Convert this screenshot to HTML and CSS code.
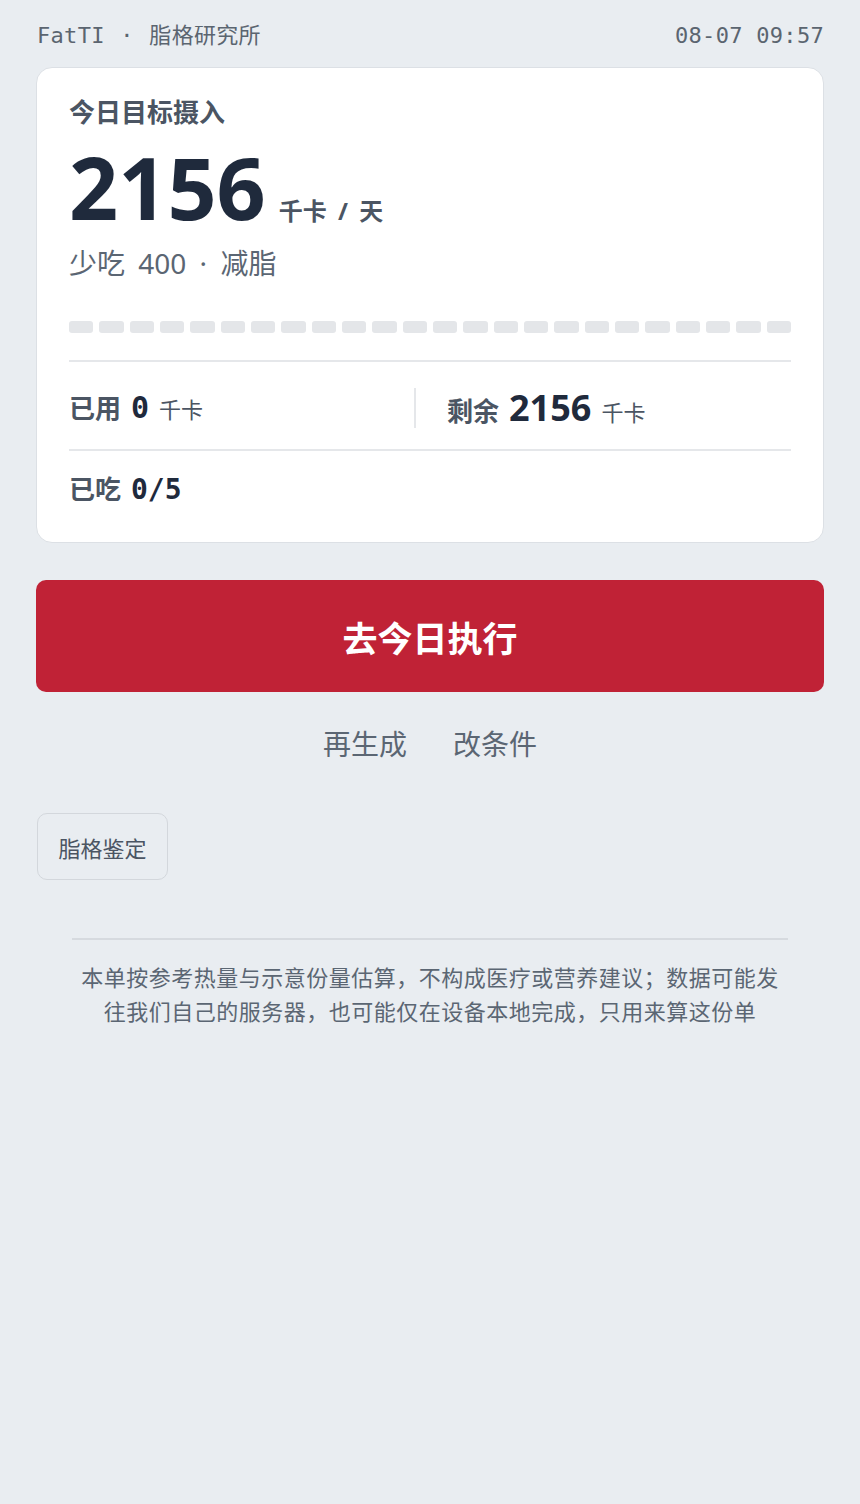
FILE: index.html
```html
<!DOCTYPE html>
<html lang="zh-CN">
<head>
    <meta charset="UTF-8" />
    <title>FatTI · 脂格研究所</title>
    <link rel="stylesheet" href="styles.css">
</head>
<body>
    <div class="page">
        <header class="topbar">
            <span class="mono brand">FatTI · 脂格研究所</span>
            <span class="mono">08-07 09:57</span>
        </header>

        <section class="card">
            <div class="card-title">今日目标摄入</div>
            <div class="target">
                <span class="target-num">2156</span>
                <span class="target-unit">千卡 / 天</span>
            </div>
            <div class="target-sub">少吃 400 · 减脂</div>

            <div class="segments" id="segments">
                <!-- 24 格 -->
            </div>

            <div class="stats">
                <div class="stat">
                    <span class="stat-label">已用</span>
                    <span class="stat-mono">0</span>
                    <span class="stat-unit">千卡</span>
                </div>
                <div class="stat stat-right">
                    <span class="stat-label">剩余</span>
                    <span class="stat-num">2156</span>
                    <span class="stat-unit">千卡</span>
                </div>
            </div>

            <div class="eaten">
                <span class="stat-label">已吃</span>
                <span class="eaten-num">0/5</span>
            </div>
        </section>

        <button class="btn-go">去今日执行</button>

        <div class="links">
            <a class="link">再生成</a>
            <a class="link">改条件</a>
        </div>

        <button class="btn-tag">脂格鉴定</button>

        <footer class="note">
            本单按参考热量与示意份量估算，不构成医疗或营养建议；数据可能发往我们自己的服务器，也可能仅在设备本地完成，只用来算这份单
        </footer>
    </div>

<script>
    const seg = document.getElementById('segments');
    for (let i = 0; i < 24; i++) {
        const s = document.createElement('span');
        s.className = 'seg';
        seg.appendChild(s);
    }
</script>
</body>
</html>
```

FILE: styles.css
```css
body {
    margin: 0;
    background-color: #e9edf1;
    font-family: "Noto Sans", "Noto Sans CJK SC", sans-serif;
    color: #5b6673;
}
.page {
    padding: 0 36px;
}
.mono {
    font-family: "DejaVu Sans Mono", "Noto Sans CJK SC", monospace;
    letter-spacing: 0.3px;
}
.brand {
    word-spacing: 2px;
}
.topbar {
    display: flex;
    justify-content: space-between;
    align-items: baseline;
    height: 67px;
    line-height: 71px;
    padding-left: 1px;
    font-size: 22px;
    color: #5b6570;
}
.card {
    background-color: #fff;
    border: 1px solid #dce0e5;
    border-radius: 16px;
    padding: 28px 32px 32px;
}
.card-title {
    font-size: 26px;
    line-height: 32px;
    font-weight: 700;
    color: #4b5563;
}
.target {
    display: flex;
    align-items: baseline;
    gap: 13px;
    height: 96px;
    line-height: 96px;
    margin-top: 11px;
}
.target-num {
    font-size: 86px;
    font-weight: 700;
    color: #1f2a3c;
}
.target-unit {
    font-size: 24px;
    font-weight: 700;
    word-spacing: 5px;
    color: #4b5563;
}
.target-sub {
    font-size: 28px;
    line-height: 40px;
    margin-top: 8px;
    word-spacing: 6px;
    color: #5b6673;
}
.segments {
    display: flex;
    gap: 6px;
    margin-top: 38px;
}
.seg {
    flex: 1;
    height: 12px;
    border-radius: 3px;
    background-color: #e4e6e9;
}
.stats {
    display: grid;
    grid-template-columns: 345px 1fr;
    align-items: center;
    margin-top: 27px;
    border-top: 2px solid #e5e7ea;
    border-bottom: 2px solid #e5e7ea;
    padding: 26px 0 21px;
}
.stat {
    display: flex;
    align-items: baseline;
    gap: 10px;
    height: 40px;
    line-height: 40px;
}
.stat-right {
    border-left: 2px solid #e5e7ea;
    padding-left: 31px;
}
.stat-label {
    font-size: 26px;
    font-weight: 700;
    color: #4b5563;
}
.stat-mono {
    font-family: "DejaVu Sans Mono", monospace;
    font-size: 30px;
    font-weight: 700;
    color: #1f2a3c;
}
.stat-num {
    font-size: 36px;
    font-weight: 700;
    color: #1f2a3c;
}
.stat-unit {
    font-size: 22px;
    color: #4b5563;
}
.eaten {
    display: flex;
    align-items: baseline;
    gap: 10px;
    margin-top: 18px;
    line-height: 40px;
}
.eaten-num {
    font-family: "DejaVu Sans Mono", monospace;
    font-size: 28px;
    font-weight: 700;
    color: #1f2a3c;
}
.btn-go {
    display: block;
    width: 100%;
    height: 112px;
    margin-top: 37px;
    border: none;
    border-radius: 10px;
    background-color: #c02236;
    color: #fff;
    font-family: inherit;
    font-size: 35px;
    font-weight: 700;
    cursor: pointer;
}
.links {
    display: flex;
    justify-content: center;
    gap: 46px;
    margin-top: 32px;
    font-size: 28px;
    line-height: 40px;
}
.link {
    color: #5b6673;
    cursor: pointer;
}
.btn-tag {
    display: block;
    margin-top: 49px;
    margin-left: 1px;
    width: 131px;
    height: 67px;
    border: 1.5px solid #d3d7dc;
    border-radius: 10px;
    background-color: #e9edf1;
    color: #4b5563;
    font-family: inherit;
    font-size: 22px;
}
.note {
    margin: 58px 36px 0;
    padding: 20px 4px 0;
    border-top: 2px solid #d6dadf;
    text-align: center;
    font-size: 22px;
    line-height: 34px;
    letter-spacing: 0.5px;
    color: #5b6673;
}
```
